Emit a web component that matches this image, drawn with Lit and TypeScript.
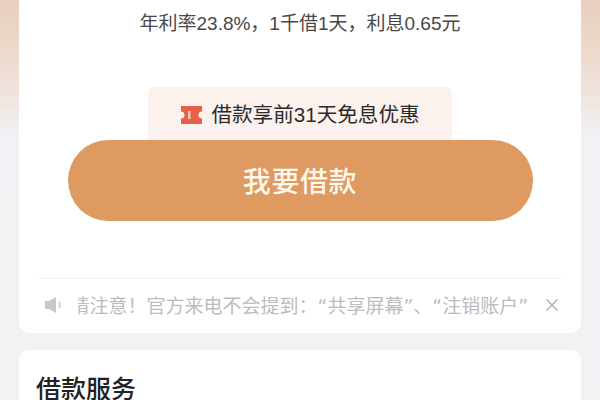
import { LitElement, html, css } from "lit";
import { customElement } from "lit/decorators.js";

@customElement("app-root")
export class AppRoot extends LitElement {
  static styles = css`
    :host {
      display: block;
      width: 600px;
      height: 400px;
      overflow: hidden;
      font-family: "Liberation Sans", "Noto Sans CJK SC", sans-serif;
    }
    .page {
      height: 400px;
      box-sizing: border-box;
      padding: 0 19px;
      display: flex;
      flex-direction: column;
      gap: 17px;
      background: linear-gradient(180deg, #e8cfbd 0px, #ecd9cb 50px, #f0e2dc 90px, #f1ebe9 115px, #f2f2f6 140px, #f2f2f5 400px);
    }
    .card {
      background: #fff;
      flex: none;
    }
    .main {
      height: 333px;
      border-radius: 0 0 10px 10px;
      display: flex;
      flex-direction: column;
      align-items: center;
    }
    .rate {
      margin-top: 12px;
      height: 24px;
      line-height: 24px;
      font-size: 19px;
      color: #484848;
      white-space: nowrap;
    }
    .promo {
      margin-top: 51px;
      width: 304px;
      height: 53px;
      box-sizing: border-box;
      padding-top: 13px;
      border-radius: 6px 6px 0 0;
      background: #fbf1ed;
      display: flex;
      justify-content: center;
      align-items: flex-start;
      gap: 8px;
      font-size: 20.6px;
      line-height: 29px;
      color: #2b2b2b;
      white-space: nowrap;
    }
    .promo svg {
      width: 23px;
      height: 20px;
      margin-top: 5px;
      flex: none;
    }
    .btn {
      width: 465px;
      height: 81px;
      box-sizing: border-box;
      padding-bottom: 2px;
      border-radius: 41px;
      background: #de9a60;
      color: #fdf6ea;
      display: flex;
      align-items: center;
      justify-content: center;
      font-size: 28px;
      font-weight: 500;
      letter-spacing: 0.6px;
    }
    .notice {
      margin-top: 57px;
      width: 524px;
      height: 53px;
      border-top: 1px solid #f3f3f3;
      box-sizing: border-box;
      display: flex;
      align-items: center;
      color: #bcbcbc;
      font-size: 19px;
    }
    .notice .speaker {
      width: 20px;
      height: 18px;
      margin-left: 6px;
      flex: none;
    }
    .marquee {
      margin-left: 14px;
      margin-bottom: 2px;
      width: 450px;
      overflow: hidden;
      white-space: nowrap;
      flex: none;
      display: flex;
      justify-content: flex-end;
    }
    .marquee span.text {
      flex: none;
    }
    .q {
      font-family: "DejaVu Sans", sans-serif;
    }
    .notice .close {
      margin-left: 18px;
      width: 12px;
      height: 12px;
      flex: none;
    }
    .service {
      height: 50px;
      border-radius: 10px 10px 0 0;
      padding: 21px 0 0 17px;
      box-sizing: border-box;
      font-size: 25px;
      font-weight: 500;
      line-height: 36px;
      color: #222;
    }
  `;

  render() {
    return html`
      <div class="page">
        <div class="card main">
          <div class="rate">年利率23.8%，1千借1天，利息0.65元</div>
          <div class="promo">
            <svg viewBox="0 0 23 20">
              <path fill="#e8604c" d="M1 1h21v5.5a3.5 3.5 0 0 0 0 7V19H1v-5.5a3.5 3.5 0 0 0 0-7z"/>
              <rect x="8" y="6" width="2.5" height="8" fill="#f9c9bc"/>
            </svg>
            <span>借款享前31天免息优惠</span>
          </div>
          <div class="btn">我要借款</div>
          <div class="notice">
            <svg class="speaker" viewBox="0 0 20 18">
              <path fill="#c8c8c8" d="M1 5h4l7-4v16l-7-4H1z"/>
              <path fill="none" stroke="#c8c8c8" stroke-width="1.5" d="M15 6q2 3 0 6"/>
            </svg>
            <div class="marquee"><span class="text">请注意！官方来电不会提到：<span class="q">“</span>共享屏幕<span class="q">”</span>、<span class="q">“</span>注销账户<span class="q">”</span></span></div>
            <svg class="close" viewBox="0 0 12 12">
              <path stroke="#a8a8a8" stroke-width="1.3" fill="none" d="M.5.5l11 11M11.5.5l-11 11"/>
            </svg>
          </div>
        </div>
        <div class="card service">借款服务</div>
      </div>
    `;
  }
}
